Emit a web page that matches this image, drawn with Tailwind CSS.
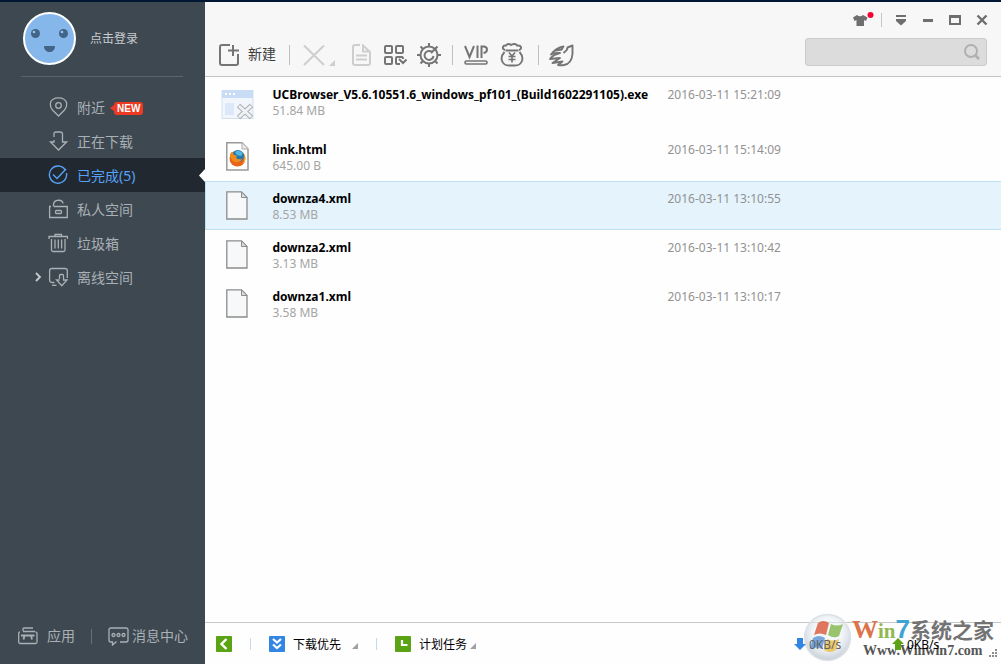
<!DOCTYPE html>
<html lang="zh-CN">
<head>
  <meta charset="UTF-8"/>
  <meta name="viewport" content="width=device-width,initial-scale=1"/>
  <title>下载管理</title>
  <script src="https://cdn.jsdelivr.net/npm/@tailwindcss/browser@4"></script>
</head>
<body class="flex min-h-screen flex-col bg-white font-['Noto_Sans','Noto_Sans_CJK_SC',sans-serif] text-xs text-black">

  <div class="h-[2px] bg-[#011734]"></div>

  <div class="flex grow">
    <!-- Sidebar -->
    <aside class="flex w-[205px] shrink-0 flex-col bg-[#3e4851] text-[#a9b0b6]">
      <div class="mx-[21px] mr-[22px] flex h-[75px] items-start border-b border-[#5b656e] pt-[10px]">
        <a href="#" class="ml-[2px] flex items-center gap-[14px] text-[#c8ccd0]">
          <svg width="53" height="53" viewBox="0 0 53 53">
            <circle cx="26.500" cy="26.500" r="25.500" fill="#86b7ea" stroke="#fff" stroke-width="2"/>
            <circle cx="12.500" cy="21.500" r="4.500" fill="#426587"/>
            <circle cx="40.500" cy="21.500" r="4.500" fill="#426587"/>
            <circle cx="11" cy="20" r="1.300" fill="#9cc5ef"/>
            <circle cx="39" cy="20" r="1.300" fill="#9cc5ef"/>
            <path d="M21 34h11c0 8-11 8-11 0z" fill="#426587"/>
          </svg>
          <span>点击登录</span>
        </a>
      </div>

      <nav class="mt-[13px] text-sm">
        <a href="#" class="flex h-[34px] items-center gap-[9px] pl-12">
          <svg width="20" height="20" viewBox="0 0 20 20" fill="none" stroke="currentColor" stroke-width="1.300">
            <path d="M10.500 19L4.500 13C1 9 2 4 5 2.300C8 .5 13 .5 16 2.300C19 4 20 9 16.500 13z"/><circle cx="10.500" cy="8.500" r="2.800"/>
          </svg>
          <span class="pt-[2px]">附近</span>
          <span class="-ml-1 flex items-center pt-[2px]">
            <svg width="4" height="6" viewBox="0 0 4 6"><path d="M0 3L4 0V6z" fill="#ee3a22"/></svg>
            <span class="rounded-[3px] bg-[#ee3a22] px-[3px] font-['Liberation_Sans',sans-serif] text-[10px] leading-[13px] font-bold text-white">NEW</span>
          </span>
        </a>
        <a href="#" class="flex h-[34px] items-center gap-[9px] pl-12">
          <svg width="20" height="20" viewBox="0 0 20 20" fill="none" stroke="currentColor" stroke-width="1.300">
            <path d="M6 6V3Q6 1 8 1H12Q14.500 1 14.500 3V11H18.500L10.500 19L2.500 11H6V9"/>
          </svg>
          <span class="pt-[2px]">正在下载</span>
        </a>
        <a href="#" aria-current="page" class="relative flex h-[34px] items-center gap-[9px] bg-[#22282f] pl-12 text-[#56a2f8]">
          <svg width="20" height="20" viewBox="0 0 20 20" fill="none" stroke="currentColor" stroke-width="1.400">
            <path d="M17.300 5A8.600 8.600 0 1 0 18.600 10V8"/><path d="M5 9.500L9 13.500L18 4"/>
          </svg>
          <span class="pt-[2px]">已完成(5)</span>
          <svg class="absolute right-0" width="6" height="13" viewBox="0 0 6 13"><path d="M6 0V13L0 6.500z" fill="#fff"/></svg>
        </a>
        <a href="#" class="flex h-[34px] items-center gap-[9px] pl-12">
          <svg width="20" height="20" viewBox="0 0 20 20" fill="none" stroke="currentColor" stroke-width="1.300">
            <path d="M5.500 7.500V5.500C6 0 14.500 0 15 4.500"/><path d="M3 7.500H1.600V18.500H19.300V7.500H6"/><rect x="7.500" y="11.500" width="6" height="3" rx="1"/>
          </svg>
          <span class="pt-[2px]">私人空间</span>
        </a>
        <a href="#" class="flex h-[34px] items-center gap-[9px] pl-12">
          <svg width="20" height="20" viewBox="0 0 20 20" fill="none" stroke="currentColor" stroke-width="1.300">
            <path d="M1 6V3.500H19.500V6"/><path d="M7 3V1.500H13.500V3"/><path d="M3.500 6V17Q3.500 18.500 5 18.500H15.500Q17 18.500 17 17V6"/><path d="M7 6.500V15.500M10.300 6.500V15.500M13.600 6.500V15.500"/>
          </svg>
          <span class="pt-[2px]">垃圾箱</span>
        </a>
        <a href="#" class="flex h-[34px] items-center pl-[35px]">
          <svg width="7" height="10" viewBox="0 0 7 10" fill="none" stroke="#c6cbd0" stroke-width="1.800"><path d="M1 1L5 5L1 9"/></svg>
          <svg class="mr-[9px] ml-[6px]" width="20" height="20" viewBox="0 0 20 20" fill="none" stroke="currentColor" stroke-width="1.300">
            <path d="M6.500 15.500H4Q1.600 15.500 1.600 13V3.500Q1.600 1.500 4 1.500H17Q19.300 1.500 19.300 3.500V11"/><path d="M4 18.300H8.500"/><path d="M11.500 12V8.500Q11.500 7.500 12.500 7.500H14.500Q15.500 7.500 15.500 8.500V13H19L13.800 18.800L8.500 13H11.500"/>
          </svg>
          <span class="pt-[2px]">离线空间</span>
        </a>
      </nav>

      <div class="mt-auto flex h-[56px] items-center pl-[18px] text-sm">
        <a href="#" class="flex items-center gap-[9px]">
          <svg width="20" height="18" viewBox="0 0 20 18" fill="none" stroke="currentColor" stroke-width="1.300">
            <path d="M5 4V2Q5 1 6 1H15M5 4.500H17"/><path d="M2 5Q.7 5 .7 6.500V15Q.7 16.500 2 16.500H17.500Q19 16.500 19 15V6.500Q19 5 17.500 5"/><path d="M3 8.500H16.500M6.500 8.500L5.500 12.500M13 8.500L14 12.500" stroke-width="1.800"/>
          </svg>
          <span>应用</span>
        </a>
        <span class="mx-4 h-[15px] w-px bg-[#66707a]"></span>
        <a href="#" class="flex items-center gap-[3px]">
          <svg width="21" height="19" viewBox="0 0 21 19" fill="none" stroke="currentColor" stroke-width="1.300">
            <path d="M12 15H18Q20 15 20 13V3Q20 1 18 1H3Q1 1 1 3V13Q1 15 3 15H4.500V18L8.500 14.500"/><circle cx="5.500" cy="8" r="1.500"/><circle cx="10.500" cy="8" r="1.500"/><circle cx="15.500" cy="8" r="1.500"/>
          </svg>
          <span>消息中心</span>
        </a>
      </div>
    </aside>

    <div class="flex min-w-0 grow flex-col">
      <header class="border-b border-[#c3c3c3] bg-[#f7f7f7]">
        <!-- Window buttons -->
        <div class="flex h-9 items-center justify-end gap-[15px] pr-[13px] text-[#6e6e6e]">
          <button type="button" aria-label="皮肤" class="-mr-2">
            <svg width="21" height="16" viewBox="0 0 21 16"><path d="M4 3L0 5.500L1.500 9L3.500 8V14H11V8L13 9L14.500 5.500L10 3Q7 5.500 4 3z" fill="currentColor"/><circle cx="17.500" cy="3" r="3" fill="#f90035"/></svg>
          </button>
          <span class="-mr-[2px] h-[14px] w-px bg-[#c4c6cc]"></span>
          <button type="button" aria-label="菜单"><svg width="12" height="12" viewBox="0 0 12 12" fill="currentColor"><path d="M1 1H11V3H1zM1 5H11V7L6 11.500L1 7z"/></svg></button>
          <button type="button" aria-label="最小化"><svg width="12" height="12" viewBox="0 0 12 12"><path d="M1 5H11V8H1z" fill="currentColor"/></svg></button>
          <button type="button" aria-label="最大化"><svg width="12" height="12" viewBox="0 0 12 12" fill="currentColor"><path fill-rule="evenodd" d="M0 1H12V11H0zM2 4V9H10V4z"/></svg></button>
          <button type="button" aria-label="关闭"><svg width="12" height="12" viewBox="0 0 12 12"><path d="M1.500 1.500L10.500 10.500M10.500 1.500L1.500 10.500" stroke="currentColor" stroke-width="2.400"/></svg></button>
        </div>

        <!-- Toolbar -->
        <div class="flex h-[38px] items-start justify-between pr-[14px] pl-[14px]">
          <div class="flex h-[34px] items-center text-[#757575]">
            <button type="button" class="flex items-center gap-2 text-sm text-[#3c3c3c]">
              <svg width="21" height="22" viewBox="0 0 21 22" fill="none" stroke="#757575" stroke-width="2"><path d="M11 1H3Q1 1 1 3V19Q1 21 3 21H17Q19 21 19 19V10M14 1V12M9 6.500H20"/></svg>
              <span class="pb-[2px]">新建</span>
            </button>
            <span class="mx-[13px] h-5 w-px bg-[#c0c0c0]"></span>
            <button type="button" aria-label="删除" class="flex items-end gap-1 text-[#cecece]">
              <svg width="22" height="22" viewBox="0 0 22 22"><path d="M1 1.500L21 21M21 1.500L1 21" stroke="currentColor" stroke-width="2"/></svg>
              <svg width="6" height="6" viewBox="0 0 6 6"><path d="M6 0V6H0z" fill="currentColor"/></svg>
            </button>
            <button type="button" aria-label="打开文件" class="ml-[17px] text-[#cecece]">
              <svg width="20" height="22" viewBox="0 0 20 22" fill="none" stroke="currentColor" stroke-width="2"><path d="M8 1H3Q1 1 1 3V19Q1 21 3 21H16Q18 21 18 19V8L11 1.500V7.500H17M4 11.500H15M4 15.500H15"/></svg>
            </button>
            <button type="button" aria-label="二维码" class="ml-3">
              <svg width="23" height="22" viewBox="0 0 23 22" fill="none" stroke="currentColor" stroke-width="2"><rect x="1" y="2" width="7" height="7" rx="1"/><rect x="12" y="2" width="7" height="7" rx="1"/><rect x="1" y="13" width="7" height="7" rx="1"/><path d="M16 20H13Q12 20 12 19V14Q12 13 13 13H18Q19 13 19 15M15 15L19 19L22.500 15.500"/></svg>
            </button>
            <button type="button" aria-label="设置" class="ml-[10px]">
              <svg width="24" height="24" viewBox="0 0 24 24" fill="none" stroke="currentColor" stroke-width="2"><circle cx="12" cy="12" r="8.500"/><path d="M15 9A4.500 4.500 0 1 0 16.500 13M14 10L19 5"/><path d="M12 0V3M12 21V24M0 12H3M21 12H24M3.500 3.500L6 6M3.500 20.500L6 18M20.500 20.500L18 18M20.500 3.500L18 6"/></svg>
            </button>
            <span class="mx-[11px] h-5 w-px bg-[#c0c0c0]"></span>
            <button type="button" aria-label="会员">
              <svg width="24" height="22" viewBox="0 0 24 22" fill="none" stroke="currentColor" stroke-width="2"><path d="M1 2L5.500 13L10 2M13.500 1.500V14M17.500 14V2.500H20Q23 3 23 5.500Q23 8.500 19.500 9"/><rect x="1" y="17" width="22" height="3" rx="1.500" stroke-width="1.700"/></svg>
            </button>
            <button type="button" aria-label="赚钱" class="ml-3">
              <svg width="24" height="24" viewBox="0 0 24 24" fill="none" stroke="currentColor" stroke-width="1.900"><path d="M5.500 7.500H18.500M5 7C1.500 6 2.500 2 6 2.500C7.500 .5 9.500 .5 11 2C13 .5 16 .5 17 2.500C21.500 2 22.500 6 19 7"/><path d="M4.500 9C-1 15 2 22.500 9 22.500H15C22 22.500 25 15 19.500 9"/><path d="M9 9.500L12 13L15 9.500M12 13V19.500M8.500 13.500H15.500M8.500 16.500H15.500" stroke-width="1.700"/></svg>
            </button>
            <span class="mr-[10px] ml-[14px] h-5 w-px bg-[#c0c0c0]"></span>
            <button type="button" aria-label="迅雷">
              <svg width="25" height="23" viewBox="0 0 25 23" fill="none" stroke="currentColor" stroke-width="1.900" stroke-linejoin="round" stroke-linecap="round"><path d="M15 8.500Q18.500 6 18.500 3.500L23.500 1.500V10Q22.500 20 15 21Q12 21.500 9 21L13.500 17.500L3.500 19L11 14L1 15Q4 10.500 11 9Q5 8.500 2 10.500Q7 4 14.500 2.500L12.500 5.500"/><path d="M7 6.500L12.500 5.500"/></svg>
            </button>
          </div>

          <label class="flex h-7 w-[182px] items-center rounded-[3px] border border-[#cbcbcb] bg-[#dcdcdc] pr-[6px]">
            <input type="text" aria-label="搜索" class="h-full min-w-0 grow px-2 outline-none"/>
            <svg class="shrink-0" width="16" height="16" viewBox="0 0 16 16" fill="none" stroke="#b0b0b0"><circle cx="7" cy="7" r="6" stroke-width="2"/><path d="M11.500 11.500L15 15" stroke-width="2.600"/></svg>
          </label>
        </div>
      </header>

      <!-- Finished downloads -->
      <main class="grow bg-[#fefefe]">
        <table class="w-full table-fixed text-left leading-4">
          <colgroup><col class="w-[67px]"/><col class="w-[395px]"/><col/></colgroup>
          <tbody>
            <tr class="h-[55px]">
              <td class="pl-[15px]">
                <svg width="34" height="32" viewBox="0 0 34 32"><rect x="1" y="1.500" width="31" height="28" fill="#f1f6fd" stroke="#d3dfef"/><path d="M1 1H32V9H1z" fill="#c9dcf5"/><path d="M4 4H6V6H4zM8 4H10V6H8zM12 4H14V6H12z" fill="#fff"/><path d="M4 14H13V26H4z" fill="#dce8f9"/><path d="M17.500 16.500L30.500 28.500M30.500 16.500L17.500 28.500" stroke="#aaafb5" stroke-width="5"/><path d="M18 17L30 28M30 17L18 28" stroke="#f1f2f4" stroke-width="3"/></svg>
              </td>
              <td class="pt-[10px] align-top"><div class="font-bold whitespace-nowrap">UCBrowser_V5.6.10551.6_windows_pf101_(Build1602291105).exe</div><div class="text-[#a4a4a4]">51.84 MB</div></td>
              <td class="pt-[10px] align-top text-[#929292]">2016-03-11 15:21:09</td>
            </tr>
            <tr class="h-[49px]">
              <td class="pl-5">
                <svg width="23" height="29" viewBox="0 0 23 29"><path d="M.8 .8H16L22 7V28H.8z" fill="#fff" stroke="#999" stroke-width="1.500"/><path d="M16 1V7H22" fill="#eee" stroke="#aaa"/><circle cx="11.500" cy="16.500" r="8" fill="#e8641b"/><circle cx="12" cy="14" r="6" fill="#2379b4"/><path d="M9 10Q13 7 17 11L15 14L11 13z" fill="#52b8de"/><path d="M4 12L6 9.500L8 13L11 13.500L10 16Q12 18 16 17Q14 21 9 20Q4 18 4 12z" fill="#f28b1d"/><path d="M18 11Q22 17 16 23Q20 17 18 11z" fill="#fbc638"/></svg>
              </td>
              <td class="pt-[10px] align-top"><div class="font-bold">link.html</div><div class="text-[#a4a4a4]">645.00 B</div></td>
              <td class="pt-[10px] align-top text-[#929292]">2016-03-11 15:14:09</td>
            </tr>
            <tr class="h-[48px] border-y border-[#bde1f2] bg-[#e4f3fc]">
              <td class="border-l border-[#bde1f2] pl-5">
                <svg width="22" height="29" viewBox="0 0 22 29"><path d="M.8 .8H15.500L21 6.500V28H.8z" fill="#f7f8f9" stroke="#8c8c8c" stroke-width="1.300"/><path d="M15.500 1V6.500H21z" fill="#ddd" stroke="#8c8c8c"/></svg>
              </td>
              <td class="pt-[9px] align-top"><div class="font-bold">downza4.xml</div><div class="text-[#a4a4a4]">8.53 MB</div></td>
              <td class="pt-[9px] align-top text-[#929292]">2016-03-11 13:10:55</td>
            </tr>
            <tr class="h-[50px]">
              <td class="pl-5">
                <svg width="22" height="29" viewBox="0 0 22 29"><path d="M.8 .8H15.500L21 6.500V28H.8z" fill="#f7f8f9" stroke="#8c8c8c" stroke-width="1.300"/><path d="M15.500 1V6.500H21z" fill="#ddd" stroke="#8c8c8c"/></svg>
              </td>
              <td class="pt-[10px] align-top"><div class="font-bold">downza2.xml</div><div class="text-[#a4a4a4]">3.13 MB</div></td>
              <td class="pt-[10px] align-top text-[#929292]">2016-03-11 13:10:42</td>
            </tr>
            <tr class="h-[49px]">
              <td class="pl-5">
                <svg width="22" height="29" viewBox="0 0 22 29"><path d="M.8 .8H15.500L21 6.500V28H.8z" fill="#f7f8f9" stroke="#8c8c8c" stroke-width="1.300"/><path d="M15.500 1V6.500H21z" fill="#ddd" stroke="#8c8c8c"/></svg>
              </td>
              <td class="pt-[10px] align-top"><div class="font-bold">downza1.xml</div><div class="text-[#a4a4a4]">3.58 MB</div></td>
              <td class="pt-[10px] align-top text-[#929292]">2016-03-11 13:10:17</td>
            </tr>
          </tbody>
        </table>
      </main>

      <!-- Status bar -->
      <footer class="relative flex h-[42px] items-center border-t border-[#c8c8c8] bg-[#fefefe] pl-[11px]">
        <button type="button" aria-label="收起"><svg width="16" height="16" viewBox="0 0 16 16"><rect width="16" height="16" rx="1" fill="#5aa315"/><path d="M10.500 3L5.500 8L10.500 13" fill="none" stroke="#fff" stroke-width="2.400"/></svg></button>
        <span class="mx-[18px] h-3 w-px bg-[#c9d9e6]"></span>
        <button type="button" class="flex items-center gap-2">
          <svg width="16" height="16" viewBox="0 0 16 16"><rect width="16" height="16" rx="1" fill="#3385e4"/><path d="M4 3L8 6.500L12 3M4 8.500L8 12L12 8.500" fill="none" stroke="#fff" stroke-width="2.200"/></svg>
          <span class="pt-[2px]">下载优先</span>
          <svg class="ml-[3px] mt-1" width="6" height="6" viewBox="0 0 6 6"><path d="M6 0V6H0z" fill="#a0a0a0"/></svg>
        </button>
        <span class="mx-[18px] h-3 w-px bg-[#c9d9e6]"></span>
        <button type="button" class="flex items-center">
          <svg width="16" height="16" viewBox="0 0 16 16"><rect width="16" height="16" rx="1" fill="#5aa315"/><path d="M7 4V9H12.500" fill="none" stroke="#fff" stroke-width="2.200"/></svg>
          <span class="mr-[3px] ml-2 pt-[2px]">计划任务</span>
          <svg class="mt-1" width="6" height="6" viewBox="0 0 6 6"><path d="M6 0V6H0z" fill="#a0a0a0"/></svg>
        </button>

        <!-- Site watermark, its globe and name lie round the speed readout -->
        <div class="pointer-events-none absolute right-[6px] bottom-[2px] flex items-center">
          <svg width="49" height="49" viewBox="0 0 49 49">
            <defs><radialGradient id="orb" cx=".5" cy=".4" r=".6"><stop offset=".5" stop-color="#eaf0f5" stop-opacity=".5"/><stop offset="1" stop-color="#b2bdc9" stop-opacity=".75"/></radialGradient></defs>
            <circle cx="24.500" cy="24.500" r="23" fill="url(#orb)" stroke="#dde2e7" stroke-width="1.500"/>
            <g opacity=".8">
              <path d="M15 10Q20 6 26 10L23 22Q17 19 11 22z" fill="#dd5638"/>
              <path d="M28 11Q34 14 40 11L36 23Q31 26 25 22z" fill="#80b84b"/>
              <path d="M10 25Q16 21 22 25L19 36Q13 33 7 36z" fill="#5b94d4"/>
              <path d="M24 26Q30 29 36 26L33 37Q27 41 21 37z" fill="#efbe44"/>
            </g>
          </svg>
          <div class="w-[143px] font-['Liberation_Serif','Noto_Sans_CJK_SC',serif] font-bold whitespace-nowrap text-[#737373]">
            <div class="text-[21px] leading-6"><span class="text-[26px] text-[#dd7349]">W</span><span class="text-[#92b950]">in</span><span class="font-['Liberation_Sans',sans-serif] text-[26px] text-[#42a3d3]">7</span>系统之家</div>
            <div class="pl-[11px] text-sm leading-4 text-[#555]">Www.Winwin7.com</div>
          </div>
        </div>

        <div class="relative ml-auto flex items-center pr-1">
          <span class="flex w-[98px] items-center gap-[3px]"><svg width="12" height="12" viewBox="0 0 12 12"><path d="M3 0H9V6H12L6 12L0 6H3z" fill="#3385e4"/></svg><span class="pt-[2px] text-[#5d646c]">0KB/s</span></span>
          <span class="flex w-[97px] items-center gap-[3px]"><svg width="12" height="12" viewBox="0 0 12 12"><path d="M3 12H9V6H12L6 0L0 6H3z" fill="#5aa315"/></svg><span class="pt-[2px]">0KB/s</span></span>
          <svg class="mt-[18px]" width="8" height="8" viewBox="0 0 8 8" fill="#8c8c8c"><path d="M6 0H8V2H6zM3 3H5V5H3zM6 3H8V5H6zM0 6H2V8H0zM3 6H5V8H3zM6 6H8V8H6z"/></svg>
        </div>
      </footer>
    </div>
  </div>

</body>
</html>
